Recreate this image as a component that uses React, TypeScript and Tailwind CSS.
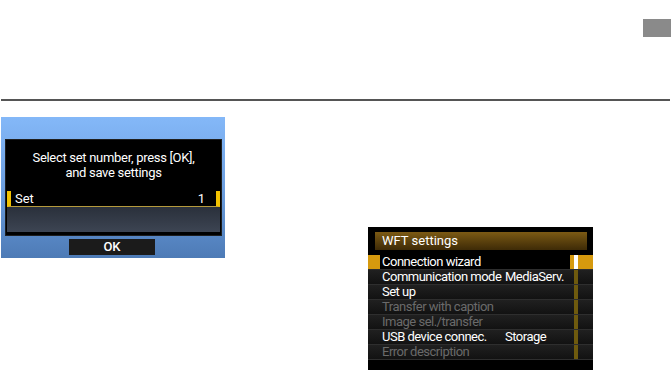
const font = { fontFamily: 'Roboto, "Liberation Sans", sans-serif' };

type Row = { label: string; value?: string; dim?: boolean };

const rows: Row[] = [
  { label: 'Connection wizard' },
  { label: 'Communication mode', value: 'MediaServ.' },
  { label: 'Set up' },
  { label: 'Transfer with caption', dim: true },
  { label: 'Image sel./transfer', dim: true },
  { label: 'USB device connec.', value: 'Storage' },
  { label: 'Error description', dim: true },
];

const SetNumberScreen = () => (
  <div className="ml-[1px] mt-[16px] w-[224px] h-[141px] bg-gradient-to-b from-[#84b8f8] via-[#6d9fe0] to-[#4d7bb6] pt-[22px] pl-[4px]">
    <div className="w-[217px] h-[97px] bg-black border border-[#1e1e1e] flex flex-col">
      <div className="pt-[10px] h-[51px] text-center text-white text-[13px] leading-[15px] tracking-[-0.3px]">
        <p>Select set number, press [OK],</p>
        <p>and save settings</p>
      </div>
      <div className="mx-[1px] h-[16px] flex items-center justify-between bg-black border-x-4 border-[#f2c200] border-b border-b-[#b59a3c] pl-[4px] pr-[11px] text-white text-[13px]">
        <span>Set</span>
        <span>1</span>
      </div>
      <div className="mx-[1px] h-[25px] bg-gradient-to-b from-[#2a303b] to-[#3d4553]" />
    </div>
    <div className="ml-[64px] mt-[3px] w-[86px] h-[16px] bg-[#1b1b1b] flex items-center justify-center text-white text-[13px] font-medium">
      OK
    </div>
  </div>
);

const WftSettingsScreen = () => (
  <div className="ml-[143px] mt-[126px] w-[225px] h-[143px] bg-black pt-[5px]">
    <div className="ml-[7px] w-[212px] h-[18px] bg-gradient-to-b from-[#7c5a14] to-[#3e2b07] flex items-center pl-[7px] text-white text-[13px]">
      WFT settings
    </div>
    <div className="mt-[5px] flex flex-col">
      {rows.map((row, i) => {
        const selected = i === 0;
        return (
          <div key={row.label} className="h-[15px] flex border-b border-[#2e2e2e]">
            <div className={selected ? 'w-[12px] bg-[#d69a0e]' : 'w-[12px] bg-gradient-to-b from-[#202020] to-[#121212]'} />
            <div
              className={
                selected
                  ? 'w-[190px] bg-black flex items-center pl-[2px] text-white text-[13px] tracking-[-0.5px]'
                  : `w-[190px] bg-gradient-to-b from-[#202020] to-[#121212] flex items-center pl-[2px] text-[13px] tracking-[-0.5px] ${row.dim ? 'text-[#6a6a6a]' : 'text-white'}`
              }
            >
              <span className="w-[123px] shrink-0 whitespace-nowrap">{row.label}</span>
              {row.value && <span className="whitespace-nowrap">{row.value}</span>}
            </div>
            <div className={selected ? 'w-[4px] bg-[#d69a0e]' : 'w-[4px] bg-gradient-to-b from-[#202020] to-[#121212]'} />
            <div className={selected ? 'w-[4px] bg-white' : 'w-[4px] bg-[#6e5a0e]'} />
            <div className={selected ? 'w-[15px] bg-[#d69a0e]' : 'w-[15px] bg-gradient-to-b from-[#202020] to-[#121212]'} />
          </div>
        );
      })}
    </div>
  </div>
);

export default function App() {
  return (
    <div className="w-[671px] h-[370px] bg-white overflow-hidden" style={font}>
      <div className="h-[99px] flex justify-end items-start pt-[19px]">
        <div className="w-[28px] h-[18px] bg-[#8a8a8a]" />
      </div>
      <div className="mx-[1px] h-[2px] bg-[#555555]" />
      <div className="flex items-start">
        <SetNumberScreen />
        <WftSettingsScreen />
      </div>
    </div>
  );
}
